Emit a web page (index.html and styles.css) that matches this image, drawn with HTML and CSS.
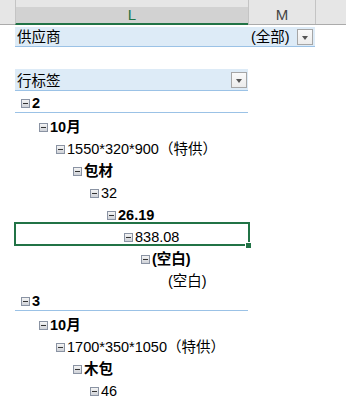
FILE: index.html
```html
<!DOCTYPE html>
<html lang="zh-CN">

<head>
    <meta charset="UTF-8">
    <meta name="viewport" content="width=device-width, initial-scale=1.0">
    <title>数据透视表</title>
    <link rel="stylesheet" href="styles.css">
</head>

<body>
    <div class="col-head">
        <div class="corner"></div>
        <div class="hcell col-l active">L</div>
        <div class="hcell col-m">M</div>
        <div class="hcell col-rest"></div>
    </div>

    <div class="sheet">
        <!-- 筛选 -->
        <div class="row">
            <div class="l blue">供应商</div>
            <div class="m blue filter"><span>(全部)</span><span class="drop"></span></div>
        </div>
        <div class="row"></div>

        <!-- 行标签 -->
        <div class="row">
            <div class="l blue label">行标签<span class="drop"></span></div>
        </div>

        <div class="row">
            <div class="l top lv0"><i class="minus"></i><b>2</b></div>
        </div>
        <div class="row">
            <div class="l lv1"><i class="minus"></i><b>10月</b></div>
        </div>
        <div class="row">
            <div class="l lv2"><i class="minus"></i>1550*320*900（特供）</div>
        </div>
        <div class="row">
            <div class="l lv3"><i class="minus"></i><b>包材</b></div>
        </div>
        <div class="row">
            <div class="l lv4"><i class="minus"></i>32</div>
        </div>
        <div class="row">
            <div class="l lv5"><i class="minus"></i><b>26.19</b></div>
        </div>
        <div class="row">
            <div class="l lv6 selected"><i class="minus"></i>838.08<div class="sel"></div></div>
        </div>
        <div class="row">
            <div class="l lv7"><i class="minus"></i><b>(空白)</b></div>
        </div>
        <div class="row">
            <div class="l lv8">(空白)</div>
        </div>

        <div class="row">
            <div class="l top lv0"><i class="minus"></i><b>3</b></div>
        </div>
        <div class="row">
            <div class="l lv1"><i class="minus"></i><b>10月</b></div>
        </div>
        <div class="row">
            <div class="l lv2"><i class="minus"></i>1700*350*1050（特供）</div>
        </div>
        <div class="row">
            <div class="l lv3"><i class="minus"></i><b>木包</b></div>
        </div>
        <div class="row">
            <div class="l lv4"><i class="minus"></i>46</div>
        </div>
        <div class="row"></div>
    </div>
</body>

</html>
```

FILE: styles.css
```css
* {
    margin: 0;
    padding: 0;
    box-sizing: border-box;
}

body {
    background-color: #fff;
    font-family: "Liberation Sans", "Noto Sans CJK SC", sans-serif;
    font-size: 14.5px;
    color: #000;
    overflow: hidden;
}

/* 列标题 */
.col-head {
    display: flex;
    height: 25px;
    background-color: #e6e6e6;
    border-bottom: 1px solid #ababab;
}

.corner {
    width: 15px;
}

.hcell {
    border-left: 1px solid #c4c4c4;
    text-align: center;
    font-family: "Liberation Sans", sans-serif;
    font-size: 15px;
    line-height: 16px;
    padding-top: 7px;
    color: #444;
}

.col-l {
    width: 233px;
}

.col-l.active {
    background: linear-gradient(#e6e6e6 0, #e6e6e6 7px, #d2d2d2 7px);
    border-bottom: 2px solid #217346;
    margin-bottom: -1px;
    color: #217346;
}

.col-m {
    width: 67px;
}

.col-rest {
    flex: 1;
}

/* 单元格 */
.row {
    display: flex;
    height: 22px;
    padding-left: 15px;
}

.l,
.m {
    display: flex;
    align-items: flex-end;
    line-height: 16px;
    white-space: nowrap;
    position: relative;
}

.l {
    width: 233px;
    padding-left: 2px;
}

.m {
    width: 67px;
}

.blue {
    background-color: #ddebf7;
    border-bottom: 1px solid #9bc2e6;
    margin-top: 2px;
    padding-bottom: 1px;
}

.filter {
    justify-content: space-between;
    padding: 0 2px 1px 3px;
}

.label {
    margin-top: 0;
    padding-right: 1px;
}

.label .drop {
    margin-left: auto;
    margin-bottom: 1px;
}

.drop {
    width: 16px;
    height: 16px;
    border: 1px solid #a6a6a6;
    background: linear-gradient(#fafafa, #ececec);
    position: relative;
}

.drop::after {
    content: "";
    position: absolute;
    left: 4px;
    top: 6px;
    border-left: 3.5px solid transparent;
    border-right: 3.5px solid transparent;
    border-top: 4px solid #555;
}

.top {
    border-bottom: 1px solid #9bc2e6;
    padding-bottom: 1px;
}

.minus {
    width: 9px;
    height: 9px;
    margin: 0 2px 3px 0;
    border: 1px solid #8a93a3;
    background: linear-gradient(#f4f4f4, #cfd2d8);
    position: relative;
    flex: none;
}

.minus::after {
    content: "";
    position: absolute;
    left: 1px;
    top: 3px;
    width: 5px;
    height: 1px;
    background-color: #333;
}

.lv0 { padding-left: 6px; }
.lv1 { padding-left: 24px; }
.lv2 { padding-left: 41px; }
.lv3 { padding-left: 58px; }
.lv4 { padding-left: 75px; }
.lv5 { padding-left: 92px; }
.lv6 { padding-left: 109px; }
.lv7 { padding-left: 126px; }
.lv8 { padding-left: 153px; }

b {
    font-weight: bold;
}

/* 选中单元格 */
.sel {
    position: absolute;
    left: -1px;
    top: -1px;
    width: 236px;
    height: 24px;
    border: 2px solid #217346;
}

.sel::after {
    content: "";
    position: absolute;
    right: -4px;
    bottom: -5px;
    width: 5px;
    height: 5px;
    background-color: #217346;
    border: 1px solid #fff;
    box-sizing: content-box;
}
```
